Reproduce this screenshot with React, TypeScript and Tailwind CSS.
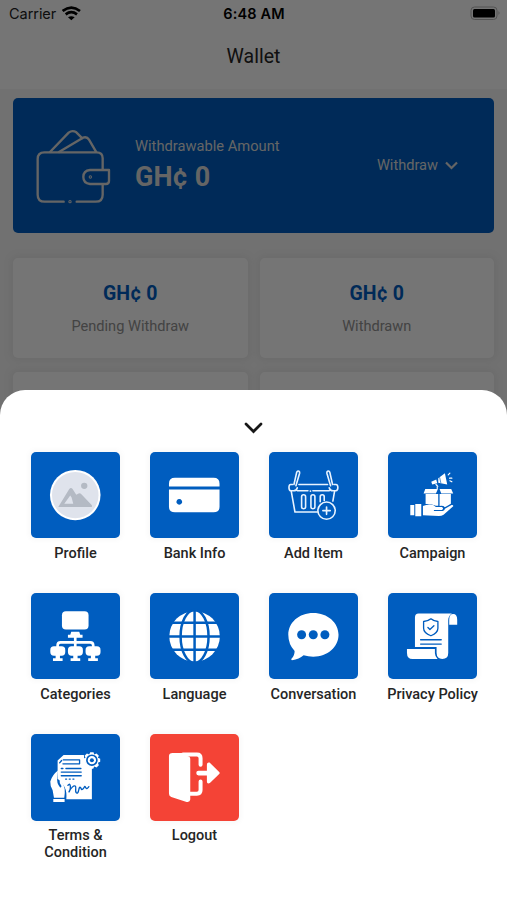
import type { ReactNode } from "react";

type Tile = { label: string; box: string; art: ReactNode; danger?: boolean };

const BLUE = "#005dbf";

const tiles: Tile[] = [
  {
    label: "Profile",
    box: "34 35 266 261",
    art: (
      <>
        <circle cx="167" cy="165" r="76" fill="#fff" />
        <circle cx="167" cy="165" r="70" fill="#dfe3ec" />
        <circle cx="194" cy="137" r="9.500" fill="#b4bac4" />
        <path
          fill="#b4bac4"
          fillRule="evenodd"
          d="M116 201 149 147q5-7 10 0l11 17 7-4q4-2 7 1l33 35v5zM134 191h27l-5-19-4-6z"
        />
      </>
    ),
  },
  {
    label: "Bank Info",
    box: "31 35 266 261",
    art: (
      <path
        fill="#fff"
        fillRule="evenodd"
        d="M88 139v-8q0-18 18-18h116q18 0 18 18v8zM88 148h152v52q0 17-18 17H106q-18 0-18-17zM119 177a8.500 8.500 0 1 0 .1 0z"
      />
    ),
  },
  {
    label: "Add Item",
    box: "34 35 266 261",
    art: (
      <g fill="none" stroke="#e8f3ff" strokeWidth="4.800" strokeLinecap="round" strokeLinejoin="round">
        <path d="M109 133l8-36q2-6 7-4 3 2 2 6l-11 38M225 133l-8-36q-2-6-7-4-3 2-2 6l11 38" />
        <path d="M124 133h86M119 152h32M166 152h49M105 133h-6q-5 0-5 9t5 10h9q9 0 11-9M229 133h6q6 0 6 9t-6 10h-9q-9 0-11-9" />
        <path d="M101 154l11 62h68M231 154l-5 29M158 153h1" />
        <rect x="132" y="164" width="12" height="42" rx="6" />
        <rect x="160" y="164" width="12" height="42" rx="6" />
        <path d="M188 185v-15q0-6 6-6t6 6v11" />
        <circle cx="207" cy="212" r="26" fill={BLUE} />
        <path d="M196 212h22M207 201v22" strokeWidth="5" />
      </g>
    ),
  },
  {
    label: "Campaign",
    box: "36 35 266 261",
    art: (
      <>
        <g fill="#fff">
          <path d="M103 195h12v31h-12zM118 192h18v37h-18zM141 198q16-8 31-3l8 6h18q7 4 0 9h-24v3h27q6-3 6-7l20-11q6-1 5 4l-29 25q-6 4-14 4l-48-2z" />
          <path d="M149 162h38v35h-7q-13-6-31-5zM191 162h34v29l-18 11q-5-6-16-4zM148 147h38l-6 13h-37zM191 147h35l6 13h-36z" />
          <path d="M187 114 207 99l7 34-27-5zM166 125l15-7 3 11-15 4zM177 132h6l5 8h-4z" />
        </g>
        <path
          d="M217 104l5-5M221 114h7M222 122l6 3M184 140v5"
          stroke="#fff"
          strokeWidth="3.500"
          strokeLinecap="round"
          fill="none"
        />
        <path d="M191 111l4 18" stroke={BLUE} strokeWidth="2" />
      </>
    ),
  },
  {
    label: "Categories",
    box: "34 32 266 261",
    art: (
      <>
        <g fill="#fff">
          <rect x="127" y="87" width="80" height="55" rx="12" />
          <path d="M155 149h24l3 9h7v9h-44v-9h7z" />
          {[92, 145, 198].map((x) => (
            <g key={x}>
              <rect x={x} y="193" width="45" height="28" rx="11" />
              <path d={`M${x + 16} 219h13v10h8v8h-29v-8h8z`} />
            </g>
          ))}
        </g>
        <path
          d="M167 165v30M114 195v-5q0-9 9-9h89q9 0 9 9v5"
          fill="none"
          stroke="#fff"
          strokeWidth="8"
        />
      </>
    ),
  },
  {
    label: "Language",
    box: "390 32 266 261",
    art: (
      <>
        <circle cx="524" cy="163" r="76" fill="#fff" />
        <g fill="none" stroke={BLUE} strokeWidth="7.500">
          <path d="M524 85v156M446 163h156M450 122h148M450 203h148" />
          <ellipse cx="524" cy="163" rx="42" ry="80" />
        </g>
      </>
    ),
  },
  {
    label: "Conversation",
    box: "34 32 266 261",
    art: (
      <>
        <path
          fill="#fff"
          d="M167 92c43 0 76 29 76 66s-33 66-76 66q-15 0-29-4-13 12-35 15-4-1-1-5 9-9 9-23-19-20-19-49c0-37 32-66 75-66z"
        />
        <g fill={BLUE}>
          <circle cx="132" cy="158" r="13.500" />
          <circle cx="167" cy="158" r="13.500" />
          <circle cx="202" cy="158" r="13.500" />
        </g>
      </>
    ),
  },
  {
    label: "Privacy Policy",
    box: "390 32 266 261",
    art: (
      <>
        <path
          fill="#fff"
          d="M482 94h100q-11 7-11 21v98q0 18-18 18-16 0-17-18v-18h-65v-89q0-12 11-12zM574 128v-15q0-18 12-18t12 18v15zM447 201h84v13q0 9 8 17h-75q-17 0-17-19z"
        />
        <g fill="none" stroke={BLUE} strokeWidth="4" strokeLinecap="round" strokeLinejoin="round">
          <path d="M519 110q9 8 21 8v20q0 14-21 23-22-9-22-23v-20q13 0 22-8z" />
          <path d="M510 136l6 6 12-11M488 173h62M488 186h62" />
        </g>
      </>
    ),
  },
  {
    label: "Terms & Condition",
    box: "34 27 266 261",
    art: (
      <>
        <path fill="#fff" d="M114 107l18-17h61q0 29 24 38v96h-77q3-29-10-45l-9-12-7-4z" />
        <path
          fill="#fff"
          d="M115 137q-17 13-23 33-1 12 7 27l4 22h31q5-31-6-45l-8-12q-2 12 6 23l-4 4q-12-14-9-29zM101 223h34v9h-34z"
        />
        <g fill="none" stroke={BLUE} strokeWidth="4" strokeLinecap="round">
          <path d="M131 105h49M130 117h50M180 105v12M126 107l-6 7M125 131h5M139 131h45M125 142h60M125 153h60" />
          <path d="M138 163h3M149 163h3M160 163h3" />
          <path d="M145 182c5-8 9 0 7 10s-6 13-2 6 12-17 17-14-3 17 4 21 6-20 11-17 2 10 8 5 4-12 8-5 5 4 10-2" />
        </g>
        <path
          fill="#fff"
          d="M212 82h10l2 7 7-3 7 7-3 6 7 3v9l-7 3 3 7-7 7-7-3-3 7h-9l-3-7-7 3-7-7 3-7-7-3v-9l7-3-3-6 7-7 7 3z"
        />
        <circle cx="217" cy="106" r="15" fill="none" stroke={BLUE} strokeWidth="5" />
        <circle cx="217" cy="106" r="6" fill={BLUE} />
      </>
    ),
  },
  {
    label: "Logout",
    box: "31 27 266 261",
    danger: true,
    art: (
      <>
        <path fill="#fff" d="M88 94q0-10 11-10h35v6l14 5q4 2 4 7v123q-1 9-11 7l-46-15q-7-3-7-10z" />
        <path
          d="M130 89h42q11 0 11 11v20M183 170v26q0 11-11 11h-22"
          fill="none"
          stroke="#fff"
          strokeWidth="12"
          strokeLinecap="round"
        />
        <path
          fill="#fff"
          d="M177 138h25v-18q0-9 8-7l29 29q3 3 0 6l-28 27q-9 4-9-5v-18h-25q-7 0-7-7t7-7z"
        />
      </>
    ),
  },
];

function StatusBar() {
  return (
    <div className="grid h-7 grid-cols-3 items-center pl-[9px] pr-[6px] font-[Inter,sans-serif] text-black">
      <div className="flex items-center gap-[6px]">
        <span className="text-[14.500px] tracking-[-0.050px] text-[#222]">Carrier</span>
        <svg
          className="mt-[-2px]"
          width="19"
          height="15"
          viewBox="185 17 57 45"
          fill="none"
          stroke="#000"
          strokeWidth="8"
        >
          <path d="M187 32q26-20 52 0M196 42q17-13 34 0" />
          <path d="M203 51q10-7 20 0l-10 9z" fill="#000" stroke="none" />
        </svg>
      </div>
      <span className="ml-[-2px] text-center text-[14.500px] font-semibold tracking-[0.150px]">6:48 AM</span>
      <svg className="mt-[-2px] justify-self-end" width="31" height="15" viewBox="0 0 31 15">
        <rect x="1" y="1" width="26" height="12.500" rx="3.500" fill="none" stroke="#b5b5b5" />
        <rect x="3" y="3" width="22" height="8.500" rx="1.500" fill="#000" />
        <path d="M28.500 5q2 2 0 4z" fill="#b5b5b5" />
      </svg>
    </div>
  );
}

function WalletIcon() {
  return (
    <svg
      className="ml-[-1px] mt-[2px]"
      width="76"
      height="78"
      viewBox="109 112 228 234"
      fill="none"
      stroke="#ddd"
      strokeWidth="7"
      strokeLinecap="round"
      strokeLinejoin="round"
    >
      <path d="M195 333h-57q-21 0-21-21V205q0-20 20-20h157q18 0 18 18v33M312 282v30q0 21-21 21h-57" />
      <path d="M331 238h-57q-20 2-20 21t20 21h48q9 0 9-9zM154 184l56-58q11-9 23-1l18 18M181 184l72-43q12-4 18 6l21 36" />
      <circle cx="275" cy="259" r="1.500" />
      <circle cx="214" cy="333" r="1.500" />
    </svg>
  );
}

function Stat({ label }: { label: string }) {
  return (
    <div className="flex h-[100px] flex-col items-center rounded-[5px] bg-white pt-[22px] shadow-[0_0_6px_4px_#ececec]">
      <span className="text-[19.500px] font-bold leading-7 text-[#005dbf]">GH¢ 0</span>
      <span className="mt-[8px] text-[14.600px] leading-5 text-[#929292]">{label}</span>
    </div>
  );
}

function MenuItem({ label, box, art, danger }: Tile) {
  return (
    <div className="flex h-[141.300px] flex-col items-center">
      <div
        className={`h-[86.500px] w-[88.500px] shrink-0 overflow-hidden rounded-[5px] shadow-[0_0_5px_3px_#fafafa] ${danger ? "bg-[#f44336]" : "bg-[#005dbf]"}`}
      >
        <svg className="h-full w-full" viewBox={box} preserveAspectRatio="none">
          {art}
        </svg>
      </div>
      <span className="mt-[6.500px] w-[100px] text-center text-[14.500px] font-medium leading-[17px] text-[#252525]">
        {label}
      </span>
    </div>
  );
}

export default function App() {
  return (
    <div className="relative h-[900px] w-full overflow-hidden bg-[#f6f6f6] font-[Roboto,sans-serif]">
      <header className="h-[89px] bg-white">
        <StatusBar />
        <h1 className="pt-[15px] text-center text-[19.500px] leading-7 text-[#252525]">Wallet</h1>
      </header>
      <main className="px-[13px] pt-[9px]">
        <section className="flex h-[135px] items-center rounded-[5px] bg-[#005dbf] pl-[23px] pr-[36px] text-white">
          <WalletIcon />
          <div className="ml-[24px] mt-[1px]">
            <p className="text-[14.700px] leading-5 text-[#ddd]">Withdrawable Amount</p>
            <p className="mt-[2px] text-[27px] font-bold leading-[38px] text-[#ddd]">GH¢ 0</p>
          </div>
          <div className="ml-auto mt-px flex items-center gap-[7px] text-[14.600px] text-[#ddd]">
            Withdraw
            <svg width="13" height="9" viewBox="0 0 13 9" fill="none" stroke="currentColor" strokeWidth="2.200">
              <path d="M1 1.500l5.500 5.500L12 1.500" />
            </svg>
          </div>
        </section>
        <section className="mt-[25px] grid grid-cols-2 gap-x-[12px] gap-y-[14px]">
          <Stat label="Pending Withdraw" />
          <Stat label="Withdrawn" />
          <div className="h-[100px] rounded-[5px] bg-white shadow-[0_0_6px_4px_#ececec]" />
          <div className="h-[100px] rounded-[5px] bg-white shadow-[0_0_6px_4px_#ececec]" />
        </section>
      </main>
      <div className="absolute inset-0 flex flex-col justify-end bg-black/54">
        <section className="h-[510px] rounded-t-[25px] bg-white">
          <div className="flex h-[61.600px] justify-center pt-[32px]">
            <svg
              width="19"
              height="12"
              viewBox="0 0 19 12"
              fill="none"
              stroke="#171717"
              strokeWidth="2.700"
              strokeLinecap="round"
            >
              <path d="M2 2l7.500 7.500L17 2" />
            </svg>
          </div>
          <div className="grid grid-cols-4 pl-[16px] pr-[15px]">
            {tiles.map((tile) => (
              <MenuItem key={tile.label} {...tile} />
            ))}
          </div>
        </section>
      </div>
    </div>
  );
}
